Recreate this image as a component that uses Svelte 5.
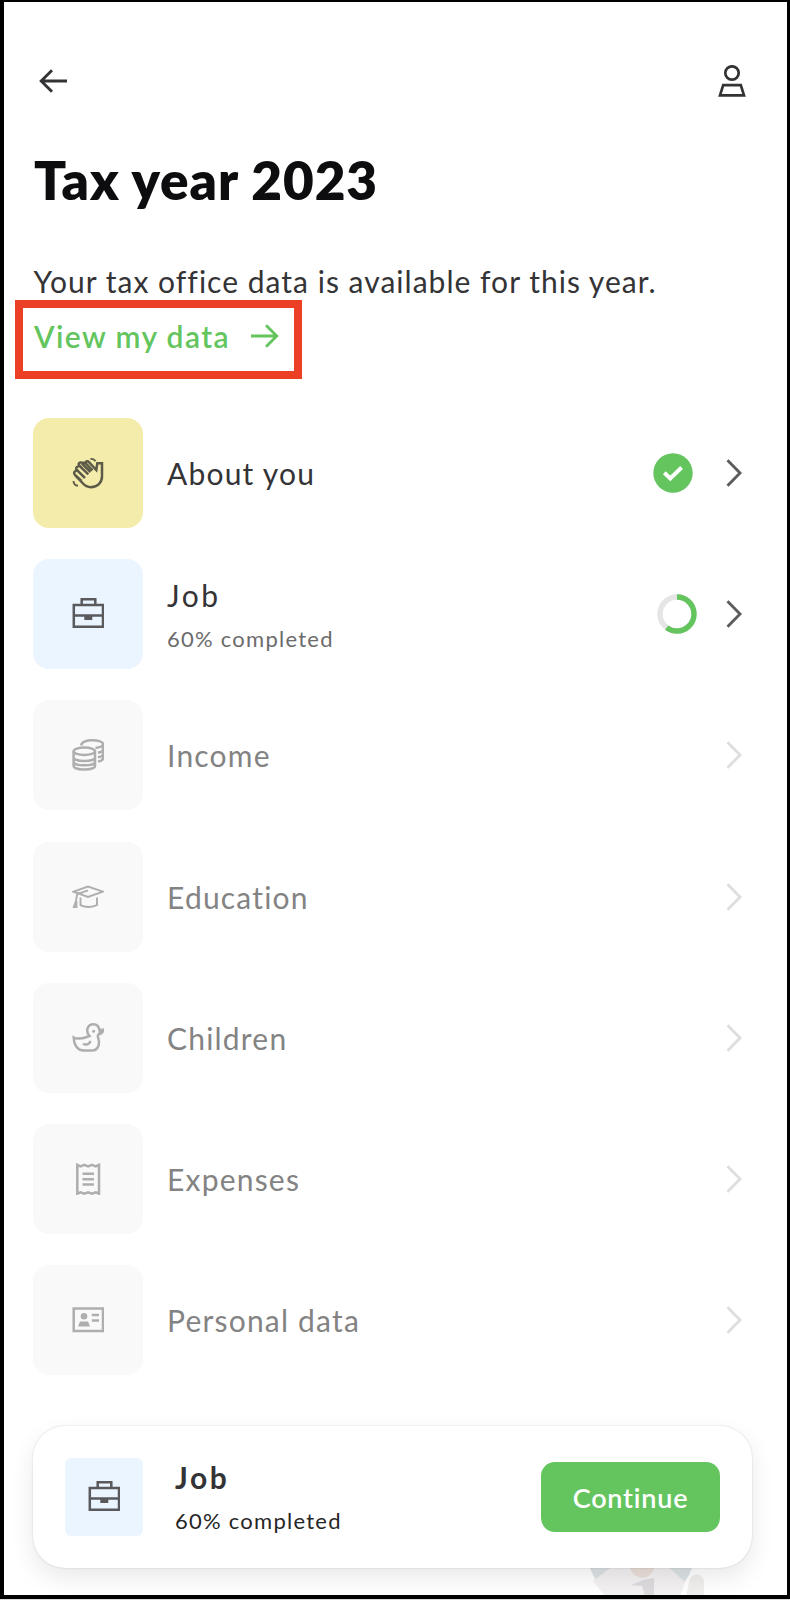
<script>
    let year = 2023;

    let sections = [
        { title: "About you", icon: "hand", state: "done", color: "yellow" },
        { title: "Job", icon: "case", state: "progress", color: "blue", progress: 60 },
        { title: "Income", icon: "coins", state: "locked" },
        { title: "Education", icon: "cap", state: "locked" },
        { title: "Children", icon: "duck", state: "locked" },
        { title: "Expenses", icon: "receipt", state: "locked" },
        { title: "Personal data", icon: "card", state: "locked" },
    ];

    let current = sections[1];

    // Circumference of the progress ring
    const ring = 2 * Math.PI * 17;
</script>

{#snippet icon(name)}
    <svg class="icon" viewBox="0 0 32 32">
        {#if name === "hand"}
            <path d="M30 6.300H25.300L24.300 13L17 5.200C15.800 3.600 13.600 4.200 13.500 6L8.800 5.500C7 5.300 6 7 7.200 8.500L5.500 9.600C4 10.200 3.800 12 5 13.200L3.300 14.200C1.800 15 1.800 16.700 3 18L10.500 26C13 28.800 15.500 30.200 18.800 30.200C25.500 30.200 30 25.500 30 19.500Z" />
            <path d="M5 13.200L13 21M7.200 8.500L16.300 17.300M13.500 6L20.500 13.300M10 6.500L18.500 15M3.500 18.500L9.500 24" />
            <path class="thin" d="M18.500 2C20.800 1.600 22.500 2.500 23.500 4.300M1.500 24C1.600 26.800 3.200 28.500 6 28.800" />
        {:else if name === "case"}
            <path d="M9.700 6.500V1.300H23.300V6.500M1.800 7H31V28.700H1.800ZM1.800 17.500H31" />
            <path class="solid" d="M12.300 17.500h8v4.500h-8z" />
        {:else if name === "coins"}
            <ellipse cx="12.300" cy="12.300" rx="10.700" ry="3.700" />
            <path d="M1.600 12.300V27C1.600 29 6 30.500 12.300 30.500S23 29 23 27V12.300M1.600 18.500C1.600 20.500 6 22 12.300 22S23 20.500 23 18.500M1.600 23C1.600 25 6 26.300 12.300 26.300S23 25 23 23" />
            <path d="M9.300 6.500C9.300 3 14 1.300 20.300 1.300S31 3 31 5V19C31 20.800 29 22 26 22.600M31 5C31 7.500 28 8.500 23.500 9M31 10.500C31 12 29 13.200 26 13.700M31 14.900C31 16.500 29 17.700 26 18.200" />
        {:else if name === "cap"}
            <path class="thin" d="M1.500 10.700L16 5.600L31 10.700L16 16L1.500 10.700ZM16 9.300L5.500 13C4.500 15 4.300 17 4 20L1.800 26H4.500V20M8.500 16.500V24C12 26.600 21 26.600 25 24V16.500" />
        {:else if name === "duck"}
            <path d="M1.700 15.500C7 18.500 13 15.500 17.500 14C13.500 9.500 15 2.700 21 2.200C25 2.100 27 4.800 27.500 8.200L31.200 7.700C31 10.500 28.500 12 26.500 12.500C24.500 14.500 27 16 27 20C27 26.500 23.500 28.500 20 28.500H12C5 28.500 1.700 22 1.700 15.500ZM11 21.700C14 23.500 17.500 22.500 18.500 18.800" />
            <path class="solid" d="M27 7.800L32 7.300C31.500 11 29.500 13 26 13Z" />
            <circle class="solid" cx="21.600" cy="9.200" r="1.500" />
        {:else if name === "receipt"}
            <path d="M5.300 1.800V30.700L8.500 29.300L12.300 30.700L16.100 29.300L19.900 30.700L23.700 29.300L27 30.700V1.800L23.700 3.300L19.900 1.800L16.100 3.300L12.300 1.800L8.500 3.300ZM10.500 10.700H22M10.500 16.200H22M10.500 21.600H22" />
        {:else if name === "card"}
            <path d="M1.700 4.400H31V27H1.700ZM19.800 11H27M19.800 16.400H27" />
            <circle class="solid" cx="12" cy="12.300" r="3.300" />
            <path class="solid" d="M8 17.500H16L18 22.600H6z" />
        {/if}
    </svg>
{/snippet}

<div class="screen">
    <header>
        <svg class="back" viewBox="0 0 28 24">
            <path d="M28 12H2M13 1.200L2.200 12L13 22.800" />
        </svg>
        <svg class="user" viewBox="0 0 28 32">
            <circle cx="14" cy="8" r="6.700" />
            <path d="M5.200 20.200H22.800L26 30.300H2Z" />
        </svg>
    </header>

    <h1>Tax year {year}</h1>
    <p class="intro">Your tax office data is available for this year.</p>

    <div class="view-data">
        <span>View my data</span>
        <svg viewBox="0 0 28 24">
            <path d="M0 12H26M15 1.200L25.800 12L15 22.800" />
        </svg>
    </div>

    <div class="list">
        {#each sections as section}
            <div class="row {section.state}">
                <div class="tile {section.color ?? ''}">{@render icon(section.icon)}</div>
                <div class="label">
                    <div class="name">{section.title}</div>
                    {#if section.progress}
                        <div class="sub">{section.progress}% completed</div>
                    {/if}
                </div>
                {#if section.state === "done"}
                    <svg class="status check" viewBox="0 0 40 40">
                        <circle cx="20" cy="20" r="19.700" />
                        <path d="M11.300 19.800L17.300 25.500L28.600 14.500" />
                    </svg>
                {:else if section.state === "progress"}
                    <svg class="status ring" viewBox="0 0 40 40">
                        <circle cx="20" cy="20" r="17" />
                        <circle class="value" cx="20" cy="20" r="17" stroke-dasharray="{ring * section.progress / 100} {ring}" />
                    </svg>
                {/if}
                <svg class="chevron" viewBox="0 0 16 28">
                    <path d="M1.500 1.300L14 14L1.500 26.700" />
                </svg>
            </div>
        {/each}
    </div>

    <div class="footer">
        <!-- Advisor photo peeking out below the card -->
        <svg class="avatar" viewBox="0 0 120 110">
            <circle cx="54" cy="54" r="54" fill="#dce3e5" />
            <path d="M26 70L6 85L26 110H90L98 86L80 70Z" fill="#f3f1f1" />
            <path d="M42 70C46 85 64 86 68 70Z" fill="#eadfd8" />
            <path d="M44 89L56 84L67 82V100H58L55 90Z" fill="#dddbde" />
            <path d="M103 82Q112 74 117 84V100H99Z" fill="#f1efee" />
        </svg>
        <div class="card">
            <div class="tile small blue">{@render icon(current.icon)}</div>
            <div class="label">
                <div class="name">{current.title}</div>
                <div class="sub">{current.progress}% completed</div>
            </div>
            <button>Continue</button>
        </div>
    </div>
</div>

<style>
    :global(body) {
        margin: 0;
        background: #d8d8d8;
    }

    .screen {
        box-sizing: border-box;
        width: 790px;
        height: 1599px;
        padding: 0 35px 0 29px;
        border: solid #000;
        border-width: 2px 3px 4px 4px;
        background: #fff;
        color: #343336;
        font-family: Lato, "Open Sans", sans-serif;
        overflow: hidden;
    }

    svg {
        display: block;
        flex: none;
        fill: none;
        stroke: currentColor;
        stroke-width: 2.5;
    }

    header {
        display: flex;
        justify-content: space-between;
        align-items: center;
        height: 32px;
        padding: 63px 6px 0 6px;
    }

    .back {
        width: 28px;
        height: 24px;
        stroke-width: 2.9;
    }

    .user {
        width: 28px;
        height: 32px;
        stroke-width: 2.7;
    }

    h1 {
        margin: 51px 0 0 1px;
        color: #0d0c0f;
        font-size: 53px;
        line-height: 64px;
        font-weight: 800;
        letter-spacing: 0.95px;
    }

    .intro {
        margin: 49px 0 0 0.5px;
        font-size: 30px;
        line-height: 40px;
        letter-spacing: 1.02px;
        white-space: nowrap;
    }

    .view-data {
        display: flex;
        align-items: center;
        box-sizing: border-box;
        width: 287px;
        height: 79px;
        margin: -1px 0 0 -18px;
        padding: 0 0 7px 11px;
        border: 8px solid #eb4026;
        color: #64c55f;
        font-size: 30px;
        font-weight: 600;
        letter-spacing: 1.4px;
    }

    .view-data span {
        width: 217px;
    }

    .view-data svg {
        width: 28px;
        height: 24px;
        stroke-width: 2.8;
    }

    .list {
        display: grid;
        gap: 31.2px;
        margin-top: 39px;
    }

    .row {
        display: flex;
        align-items: center;
        height: 110px;
        padding-right: 10px;
    }

    .tile {
        display: flex;
        flex: none;
        align-items: center;
        justify-content: center;
        width: 110px;
        height: 110px;
        border-radius: 16px;
        background: #f9f9f9;
        color: #5a5a5d;
    }

    .tile.yellow {
        background: #f4ecab;
        color: #5d5b48;
    }

    .tile.blue {
        background: #eaf5ff;
    }

    .tile.small {
        width: 78px;
        height: 78px;
        border-radius: 6px;
    }

    .icon {
        width: 32px;
        height: 32px;
    }

    .icon .thin {
        stroke-width: 1.9;
    }

    .icon .solid {
        fill: currentColor;
        stroke: none;
    }

    .label {
        flex: 1;
        padding-left: 24px;
    }

    .progress .label,
    .card .label {
        padding-top: 3px;
    }

    .name {
        font-size: 30px;
        line-height: 40px;
        letter-spacing: 1.2px;
    }

    .progress .name {
        letter-spacing: 2.6px;
    }

    .sub {
        margin-top: 6px;
        color: #6b6b6b;
        font-size: 22px;
        line-height: 36px;
        letter-spacing: 1.25px;
    }

    .status {
        width: 40px;
        height: 40px;
        margin-right: 33px;
    }

    .check circle {
        fill: #64c55f;
        stroke: none;
    }

    .check path {
        stroke: #fff;
        stroke-width: 4;
    }

    .ring {
        margin-right: 29px;
        transform: rotate(-90deg);
        stroke: #e5e5e5;
        stroke-width: 5.4;
    }

    .ring .value {
        stroke: #64c55f;
    }

    .chevron {
        width: 16px;
        height: 28px;
        color: #5c5c5e;
        stroke-width: 2.9;
    }

    .locked .tile {
        color: #aeaeae;
    }

    .locked .name {
        color: #838383;
    }

    .locked .chevron {
        color: #dedede;
    }

    .footer {
        position: relative;
        margin-top: 50.4px;
    }

    .avatar {
        position: absolute;
        top: 70px;
        left: 554px;
        width: 120px;
        height: 110px;
        stroke: none;
    }

    .card {
        position: relative;
        display: flex;
        align-items: center;
        box-sizing: border-box;
        width: 719px;
        height: 142px;
        padding: 0 32px;
        border-radius: 32px;
        background: #fff;
        box-shadow: 0 0 2px rgba(0, 0, 0, 0.16), 0 10px 24px rgba(0, 0, 0, 0.09);
    }

    .card .label {
        padding-left: 32px;
    }

    .card .name {
        font-weight: 700;
        letter-spacing: 2.6px;
    }

    .card .sub {
        color: #262626;
    }

    button {
        width: 179px;
        height: 70px;
        padding: 2px 0 0;
        border: none;
        border-radius: 14px;
        background: #64c55f;
        color: #fff;
        font-family: inherit;
        font-size: 27px;
        font-weight: 600;
        letter-spacing: 0.8px;
    }
</style>
